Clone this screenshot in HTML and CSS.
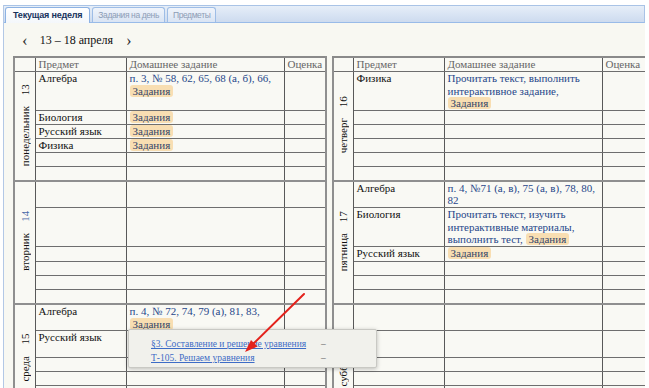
FILE: index.html
```html
<!DOCTYPE html>
<html lang="ru">
<head>
    <meta charset="UTF-8">
    <title>Дневник</title>
    <link rel="stylesheet" href="styles.css">
</head>
<body>
    <div class="panel">
        <div class="tabs">
            <div class="tab active">Текущая неделя</div>
            <div class="tab">Задания на день</div>
            <div class="tab">Предметы</div>
        </div>
        <div class="panel-body">
            <div class="week-nav">
                <span class="arrow">‹</span>
                <span class="week-title">13 – 18 апреля</span>
                <span class="arrow">›</span>
            </div>
            <table class="diary">
                <colgroup>
                    <col class="c-day"><col class="c-subj"><col class="c-hw"><col class="c-mark">
                    <col class="c-gap">
                    <col class="c-day2"><col class="c-subj"><col class="c-hw"><col class="c-mark2">
                </colgroup>
                <tr class="head">
                    <th class="day"></th><th>Предмет</th><th>Домашнее задание</th><th class="mark">Оценка</th>
                    <td class="gap" rowspan="19"></td>
                    <th class="day"></th><th>Предмет</th><th>Домашнее задание</th><th class="mark">Оценка</th>
                </tr>

                <!-- понедельник / четверг -->
                <tr>
                    <td class="day" rowspan="6"><span class="day-name">понедельник<span class="num">13</span></span></td>
                    <td>Алгебра</td>
                    <td class="hw">п. 3, № 58, 62, 65, 68 (а, б), 66, <span class="task">Задания</span></td>
                    <td class="mark"></td>
                    <td class="day" rowspan="6"><span class="day-name">четверг<span class="num">16</span></span></td>
                    <td>Физика</td>
                    <td class="hw">Прочитать текст, выполнить интерактивное задание,<br><span class="task">Задания</span></td>
                    <td class="mark"></td>
                </tr>
                <tr><td>Биология</td><td class="hw"><span class="task">Задания</span></td><td class="mark"></td><td></td><td></td><td class="mark"></td></tr>
                <tr><td>Русский язык</td><td class="hw"><span class="task">Задания</span></td><td class="mark"></td><td></td><td></td><td class="mark"></td></tr>
                <tr><td>Физика</td><td class="hw"><span class="task">Задания</span></td><td class="mark"></td><td></td><td></td><td class="mark"></td></tr>
                <tr><td></td><td></td><td class="mark"></td><td></td><td></td><td class="mark"></td></tr>
                <tr><td></td><td></td><td class="mark"></td><td></td><td></td><td class="mark"></td></tr>

                <!-- вторник / пятница -->
                <tr class="first">
                    <td class="day" rowspan="6"><span class="day-name">вторник<span class="num today">14</span></span></td>
                    <td></td><td></td><td class="mark"></td>
                    <td class="day" rowspan="6"><span class="day-name">пятница<span class="num">17</span></span></td>
                    <td>Алгебра</td>
                    <td class="hw">п. 4, №71 (а, в), 75 (а, в), 78, 80, 82</td>
                    <td class="mark"></td>
                </tr>
                <tr>
                    <td></td><td></td><td class="mark"></td>
                    <td>Биология</td>
                    <td class="hw">Прочитать текст, изучить интерактивные материалы, выполнить тест, <span class="task">Задания</span></td>
                    <td class="mark"></td>
                </tr>
                <tr class="wide"><td></td><td></td><td class="mark"></td><td>Русский язык</td><td class="hw"><span class="task">Задания</span></td><td class="mark"></td></tr>
                <tr><td></td><td></td><td class="mark"></td><td></td><td></td><td class="mark"></td></tr>
                <tr><td></td><td></td><td class="mark"></td><td></td><td></td><td class="mark"></td></tr>
                <tr><td></td><td></td><td class="mark"></td><td></td><td></td><td class="mark"></td></tr>

                <!-- среда / суббота -->
                <tr class="first">
                    <td class="day" rowspan="6"><span class="day-name">среда<span class="num">15</span></span></td>
                    <td>Алгебра</td>
                    <td class="hw">п. 4, № 72, 74, 79 (а), 81, 83, <span class="task">Задания</span></td>
                    <td class="mark"></td>
                    <td class="day" rowspan="6"><span class="day-name">суббота<span class="num">18</span></span></td>
                    <td></td><td></td><td class="mark"></td>
                </tr>
                <tr class="tall"><td>Русский язык</td><td class="hw"></td><td class="mark"></td><td></td><td></td><td class="mark"></td></tr>
                <tr><td></td><td></td><td class="mark"></td><td></td><td></td><td class="mark"></td></tr>
                <tr><td></td><td></td><td class="mark"></td><td></td><td></td><td class="mark"></td></tr>
                <tr><td></td><td></td><td class="mark"></td><td></td><td></td><td class="mark"></td></tr>
                <tr><td></td><td></td><td class="mark"></td><td></td><td></td><td class="mark"></td></tr>
            </table>
        </div>
    </div>

    <div class="popup">
        <a href="#">§3. Составление и решение уравнения</a><span class="dash">–</span>
        <a href="#">Т-105. Решаем уравнения</a><span class="dash">–</span>
    </div>

    <svg class="pointer" width="72" height="68" viewBox="0 0 72 68">
        <line x1="64" y1="4" x2="12" y2="55" stroke="#e3221c" stroke-width="2" stroke-linecap="round"/>
        <polygon points="5,62 17.5,56.5 11,50" fill="#e3221c"/>
    </svg>
</body>
</html>
```

FILE: styles.css
```css
* {
    box-sizing: border-box;
}
html, body {
    margin: 0;
    height: 100%;
    overflow: hidden;
}
body {
    position: relative;
    background-color: #fff;
    font-family: "Times New Roman", "Liberation Serif", "DejaVu Serif", serif;
    font-size: 11px;
    color: #111;
}
.panel {
    margin: 5px 4px 0 3px;
    height: 383px;
    border-left: 1px solid #b3c8e6;
}
.tabs {
    display: flex;
    align-items: flex-end;
    gap: 2px;
    height: 18px;
    padding-left: 1px;
    background: linear-gradient(#e6eef8, #cddbef);
    border-top: 1px solid #a9c3e6;
    border-right: 1px solid #a9c3e6;
    border-bottom: 1px solid #99bbe8;
}
.tab {
    height: 15px;
    padding: 0 5px;
    border: 1px solid #9ebde6;
    border-bottom: none;
    border-radius: 3px 3px 0 0;
    background: linear-gradient(#f0f4fb, #d9e4f4);
    font-family: "Liberation Sans", Arial, sans-serif;
    font-size: 8.5px;
    letter-spacing: -0.4px;
    line-height: 14px;
    color: #8d9db6;
}
.tab.active {
    height: 16px;
    margin-bottom: -1px;
    padding: 0 7px;
    border-color: #8db2e3;
    background: linear-gradient(#fff, #f4f7fb);
    color: #17325c;
    font-size: 9px;
    letter-spacing: -0.2px;
    font-weight: bold;
}
.panel-body {
    height: 100%;
    overflow: hidden;
    padding-left: 9px;
    background-color: #f8f8f2;
}
.week-nav {
    display: flex;
    align-items: center;
    gap: 12px;
    height: 33px;
    padding: 2px 0 0 9px;
    font-size: 12px;
}
.week-nav .arrow {
    font-size: 17px;
    color: #333;
}
.week-nav .week-title {
    margin-right: 1px;
}
.diary {
    width: 632px;
    table-layout: fixed;
    border-collapse: collapse;
    background-color: #f9f9f4;
}
.c-day { width: 21px; }
.c-day2 { width: 20px; }
.c-subj { width: 91px; }
.c-hw { width: 158px; }
.c-mark { width: 42px; }
.c-mark2 { width: 44px; }
.c-gap { width: 7px; }
.diary th,
.diary td {
    box-sizing: content-box;
    height: 13px;
    padding: 0 3px;
    border: 1px solid #595959;
    border-top-color: #6e6e6e;
    border-bottom-color: #6e6e6e;
    line-height: 12.6px;
    text-align: left;
    vertical-align: top;
}
.diary th {
    height: 13px;
    line-height: 13px;
    border-top: 2px solid #8a8a8a;
    font-weight: normal;
    color: #666;
}
.diary .day {
    padding: 0;
    border-left: 2px solid #8f8f8f;
    text-align: center;
    vertical-align: middle;
}
.diary .mark {
    border-right: 2px solid #8f8f8f;
}
.diary td.gap {
    padding: 0;
    border-top: hidden;
    border-bottom: hidden;
    border-left: none;
    border-right: none;
    background-color: #f8f8f2;
}
.diary tr.first td {
    border-top: 2px solid #8f8f8f;
}
.diary tr.wide td {
    height: 14px;
}
.diary tr.tall td {
    height: 26px;
}
.day-name {
    display: inline-block;
    writing-mode: vertical-rl;
    transform: rotate(180deg);
    line-height: 12px;
    white-space: nowrap;
}
.day-name .num {
    margin-inline-start: 11px;
}
.day-name .num.today {
    color: #4a68a8;
}
.hw {
    color: #26478a;
}
.task {
    display: inline-block;
    height: 12px;
    margin-top: 0.3px;
    padding: 0 3px;
    border-radius: 3px;
    background-color: #f8deb2;
    color: #34456a;
    line-height: 12px;
    vertical-align: top;
}
.popup {
    position: absolute;
    left: 128px;
    top: 329px;
    width: 249px;
    height: 39px;
    display: grid;
    grid-template-columns: 170px 20px;
    align-content: start;
    padding: 7px 0 0 22px;
    border: 1px solid #c9c9c4;
    border-radius: 2px;
    background-color: #f1f1ec;
    box-shadow: 0 1px 4px rgba(0, 0, 0, 0.25);
    font-size: 9.5px;
    line-height: 14px;
}
.popup a {
    color: #3d6cc6;
    white-space: nowrap;
}
.popup .dash {
    color: #666;
}
.pointer {
    position: absolute;
    left: 240px;
    top: 290px;
}
```
